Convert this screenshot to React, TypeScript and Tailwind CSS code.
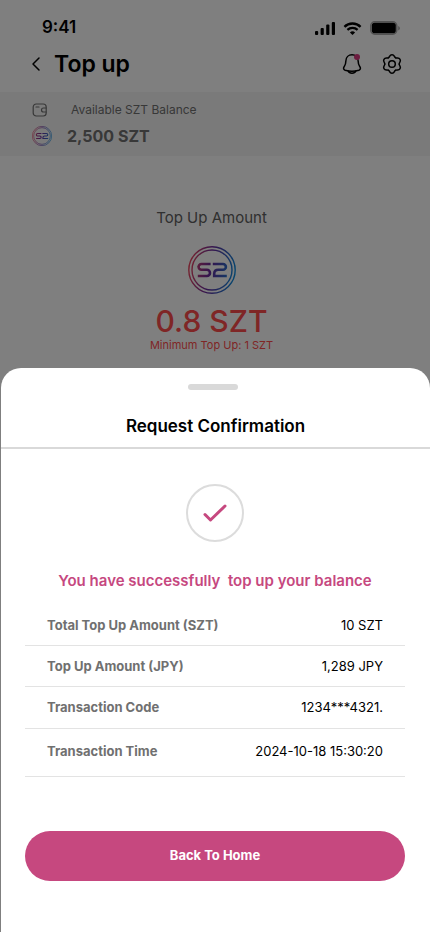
import { ChevronLeft } from "lucide-react";

const details = [
  { label: "Total Top Up Amount (SZT)", value: "10 SZT", row: "h-[41px] pt-[2px]" },
  { label: "Top Up Amount (JPY)", value: "1,289 JPY", row: "h-[41px] pt-[2px]" },
  { label: "Transaction Code", value: "1234***4321.", row: "h-[42px]" },
  { label: "Transaction Time", value: "2024-10-18 15:30:20", row: "h-12 pb-[2px]" },
];

function TokenLogo({ id, className }: { id: string; className: string }) {
  return (
    <svg viewBox="0 0 48 48" fill="none" className={className} aria-hidden="true">
      <defs>
        <linearGradient id={id} x1="0" y1="20" x2="48" y2="28" gradientUnits="userSpaceOnUse">
          <stop offset="0" stopColor="#f0485e" />
          <stop offset="0.45" stopColor="#6a2a9c" />
          <stop offset="1" stopColor="#0a8fe0" />
        </linearGradient>
      </defs>
      <g stroke={`url(#${id})`}>
        <circle cx="24" cy="24" r="23.2" strokeWidth="1.4" />
        <circle cx="24" cy="24" r="20" strokeWidth="1.4" />
        <path d="M22.6 18H13.4a2.8 2.8 0 0 0-2.8 2.9 2.8 2.8 0 0 0 2.8 2.9h5.5a3.1 3.1 0 0 1 0 6.2H9.8" strokeWidth="2.6" />
        <path d="M24.8 18H35a2.9 2.9 0 0 1 0 5.8h-4.6c-2.6 0-4.2 1.6-4.2 4V30h12.6" strokeWidth="2.6" />
      </g>
    </svg>
  );
}

function StatusIcons() {
  return (
    <div className="flex items-center gap-2">
      <svg width="20" height="13" viewBox="0 0 20 13" aria-hidden="true">
        <rect x="0" y="9" width="3.2" height="4" rx="1" />
        <rect x="5.6" y="6" width="3.2" height="7" rx="1" />
        <rect x="11.2" y="2.5" width="3.2" height="10.5" rx="1" />
        <rect x="16.8" y="0" width="3.2" height="13" rx="1" />
      </svg>
      <svg width="19" height="13" viewBox="0 0 20 14" fill="none" stroke="black" aria-hidden="true">
        <path d="M1.3 5.2a12.5 12.5 0 0 1 17.4 0" strokeWidth="2.6" />
        <path d="M4.5 8.5a7.9 7.9 0 0 1 11 0" strokeWidth="2.4" />
        <path d="M7.2 11.2a4 4 0 0 1 5.6 0L10 13.9z" fill="black" stroke="none" />
      </svg>
      <svg width="30" height="14" viewBox="0 0 30 14" aria-hidden="true">
        <rect x="0.75" y="0.75" width="26" height="12.5" rx="4" fill="none" stroke="black" strokeWidth="1.5" strokeOpacity="0.35" />
        <rect x="1.8" y="1.8" width="24" height="10.4" rx="2.8" />
        <path d="M28.3 5v4.5c1-.5 1.5-1.3 1.5-2.2S29.3 5.5 28.3 5z" fillOpacity="0.4" />
      </svg>
    </div>
  );
}

function BellIcon() {
  return (
    <svg width="20" height="22" viewBox="0 0 20 22" fill="none" stroke="black" strokeWidth="1.5" strokeLinecap="round" strokeLinejoin="round" aria-hidden="true">
      <path d="M10 1.8c-3.5 0-6 2.6-6.1 6-.1 3-.4 4-1.5 5.4-1.3 1.7-1.1 3.4.7 4 4.5 1.3 9.3 1.3 13.8 0 1.8-.6 2-2.3.7-4-1.1-1.4-1.4-2.4-1.5-5.4-.1-3.4-2.6-6-6.1-6z" />
      <path d="M6.2 18c.6 1.5 2 2.3 3.8 2.3s3.2-.8 3.8-2.3" />
    </svg>
  );
}

function WalletIcon() {
  return (
    <svg width="16" height="14" viewBox="0 0 16 14" fill="none" stroke="#707070" strokeLinecap="round" aria-hidden="true">
      <rect x="1.2" y="1" width="13" height="12" rx="3" strokeWidth="1.2" />
      <path d="M4 4h3" strokeWidth="1.2" />
      <path d="M14 5h-2.5a2 2 0 0 0 0 4H14" strokeWidth="1.2" />
    </svg>
  );
}

function GearIcon() {
  return (
    <svg width="22" height="22" viewBox="0 0 22 22" fill="none" stroke="black" strokeWidth="1.5" strokeLinecap="round" aria-hidden="true">
      <circle cx="11" cy="11" r="3.3" />
      {[0, 60, 120, 180, 240, 300].map((angle) => (
        <path
          key={angle}
          d="M7.35 4.7C8.9 4.4 8.3 1.7 11 1.7s2.1 2.700 3.650 3"
          transform={`rotate(${angle} 11 11)`}
        />
      ))}
    </svg>
  );
}

function SuccessMark() {
  return (
    <svg width="26" height="20" viewBox="0 0 26 20" fill="none" stroke="#c6487f" strokeWidth="3" strokeLinecap="round" strokeLinejoin="round" aria-hidden="true">
      <path d="M3 11.500l5.500 5.500L23 3" />
    </svg>
  );
}

export default function App() {
  return (
    <div className="relative flex min-h-screen flex-col bg-white font-['Inter',sans-serif] text-black">
      <div className="flex h-[368px] flex-col">
        <div className="flex h-12 items-end justify-between pr-[30px] pb-[13px] pl-[42px]">
          <span className="text-[17px] leading-4 font-semibold">9:41</span>
          <StatusIcons />
        </div>
        <header className="flex h-11 items-center justify-between pr-[27px] pb-3 pl-6">
          <div className="flex items-center gap-[6px]">
            <button aria-label="Go back">
              <ChevronLeft className="h-6 w-6" strokeWidth={1.5} />
            </button>
            <h1 className="text-[23px] font-semibold">Top up</h1>
          </div>
          <div className="flex items-center gap-[19px]">
            <button aria-label="Notifications" className="relative">
              <BellIcon />
              <span className="absolute top-[1px] right-[2px] h-[6px] w-[6px] rounded-full bg-[#d8387f]" />
            </button>
            <button aria-label="Settings">
              <GearIcon />
            </button>
          </div>
        </header>

        <section className="flex h-16 flex-col justify-center gap-2 bg-[#f5f5f5] pl-8">
          <div className="flex items-center gap-[23px]">
            <WalletIcon />
            <p className="text-xs leading-4 text-[#707070]">Available SZT Balance</p>
          </div>
          <div className="flex items-center gap-[15px]">
            <TokenLogo id="logo-small" className="h-5 w-5" />
            <p className="text-base leading-5 font-bold text-[#707070]">2,500 SZT</p>
          </div>
        </section>

        <section className="flex flex-col items-center pt-[50px] pr-[7px]">
          <h2 className="text-[15px] leading-6 text-[#606060]">Top Up Amount</h2>
          <TokenLogo id="logo-large" className="mt-4 h-12 w-12" />
          <p className="mt-[11px] text-[30px] leading-8 font-medium text-[#ff4d4d]">0.8 SZT</p>
          <p className="text-[11px] leading-4 text-[#ff4d4d]">Minimum Top Up: 1 SZT</p>
        </section>
      </div>

      <div className="absolute inset-0 bg-black/50" />

      <main
        role="dialog"
        aria-labelledby="sheet-title"
        className="relative ml-px flex flex-1 flex-col rounded-t-[20px] bg-white"
      >
        <div className="flex justify-center pt-4 pr-[5px]">
          <div className="h-[6px] w-[50px] rounded-full bg-[#d9d9d9]" />
        </div>
        <h2
          id="sheet-title"
          className="mt-6 border-b-2 border-[#d9d9d9] pb-[9px] text-center text-[17px] leading-6 font-semibold"
        >
          Request Confirmation
        </h2>

        <div className="mr-[25px] ml-6 flex flex-col">
          <div className="mx-auto mt-[35px] flex h-[58px] w-[58px] items-center justify-center rounded-full border-2 border-[#dcdcdc]">
            <SuccessMark />
          </div>
          <p className="mt-[29px] text-center text-[15px] leading-5 font-semibold whitespace-pre text-[#c6487f]">
            {"You have successfully  top up your balance"}
          </p>

          <dl className="mt-[14px]">
            {details.map((item) => (
              <div
                key={item.label}
                className={`flex items-center justify-between border-b border-[#e3e3e3] px-[22px] ${item.row}`}
              >
                <dt className="text-[13px] font-bold text-[#707070]">{item.label}</dt>
                <dd className="text-[13px]">{item.value}</dd>
              </div>
            ))}
          </dl>

          <button className="mt-[54px] mb-[51px] h-[50px] rounded-full bg-[#c6487f] text-[13px] font-bold text-white">
            Back To Home
          </button>
        </div>
      </main>
    </div>
  );
}
